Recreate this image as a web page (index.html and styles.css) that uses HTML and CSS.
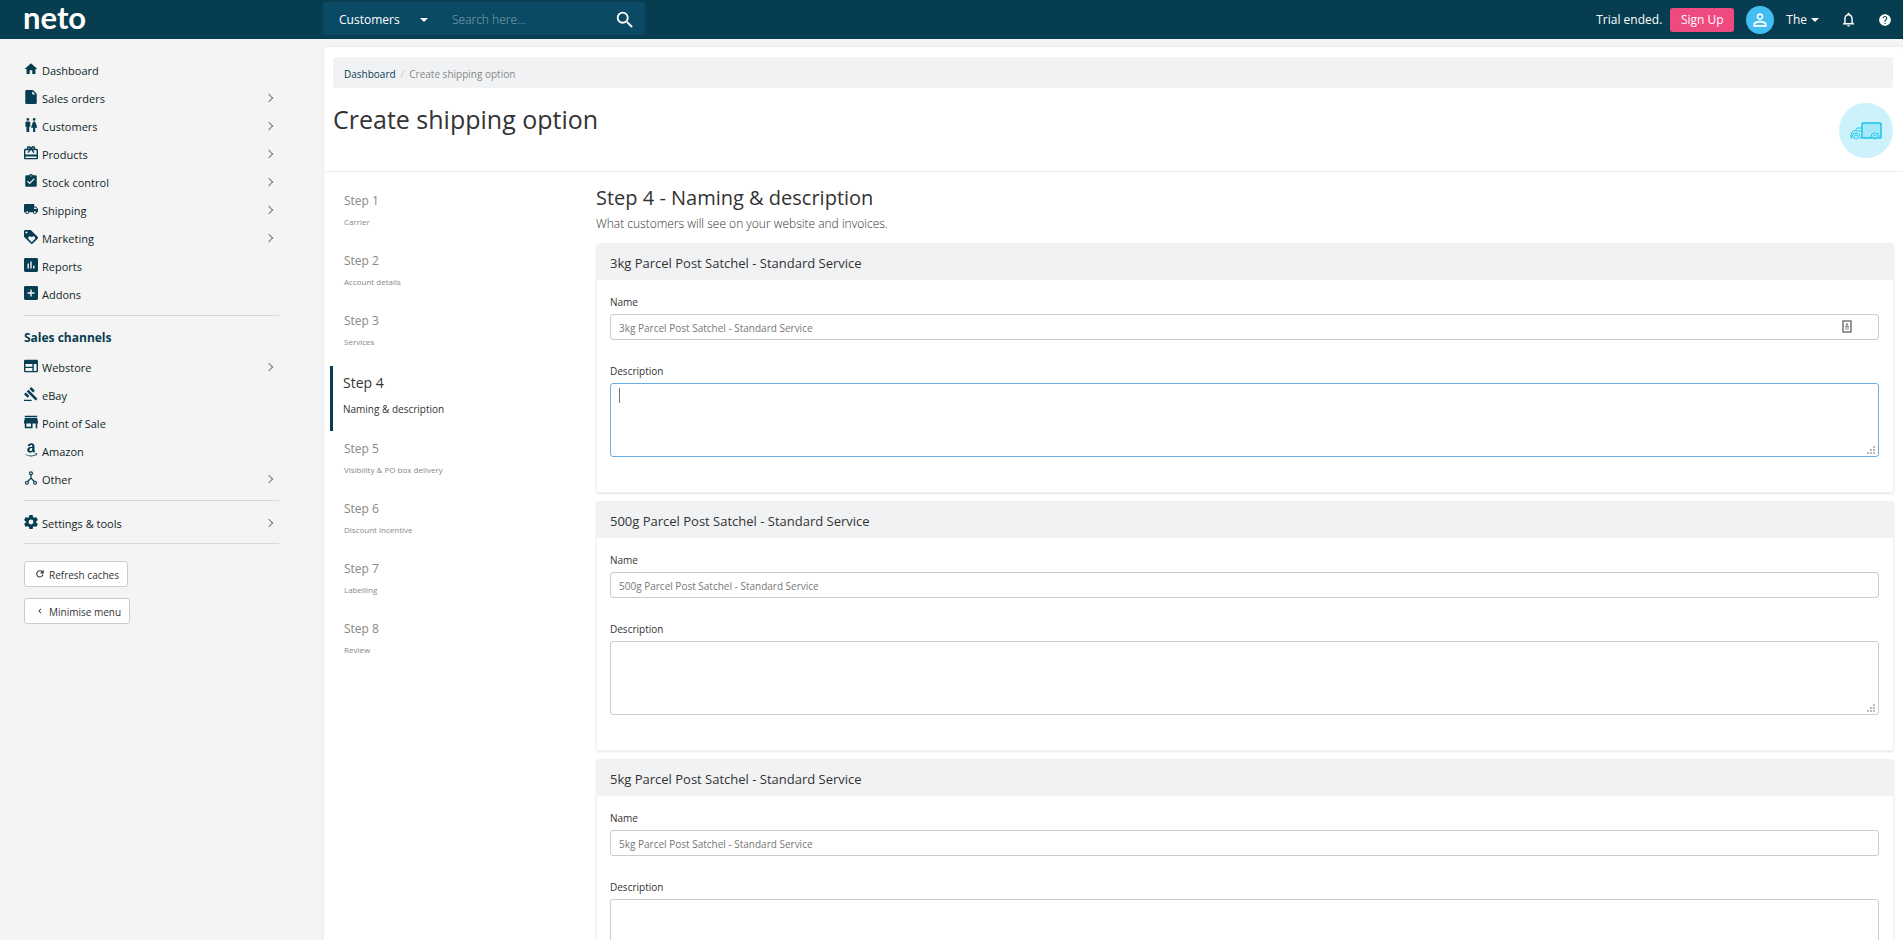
FILE: index.html
```html
<!DOCTYPE html>
<html lang="en">

<head>
    <meta charset="UTF-8">
    <meta name="viewport" content="width=device-width, initial-scale=1">
    <title>Create shipping option</title>
    <link rel="stylesheet" href="styles.css">
</head>

<body>

    <header class="topbar">
        <a class="logo" href="#">neto</a>
        <form class="search">
            <select class="search-type" aria-label="Search in">
                <option>Customers</option>
                <option>Products</option>
            </select>
            <input class="search-text" type="text" placeholder="Search here..." aria-label="Search">
            <button class="search-btn" type="button" aria-label="Search">
                <svg viewBox="0 0 24 24"><path d="M15.5 14h-.79l-.28-.27A6.471 6.471 0 0 0 16 9.5 6.5 6.5 0 1 0 9.5 16c1.61 0 3.09-.59 4.23-1.57l.27.28v.79l5 4.99L20.49 19l-4.99-5zm-6 0C7.01 14 5 11.99 5 9.5S7.01 5 9.5 5 14 7.01 14 9.5 11.99 14 9.5 14z"/></svg>
            </button>
        </form>
        <div class="account">
            <span class="trial">Trial ended.</span>
            <button class="signup">Sign Up</button>
            <span class="avatar"><svg viewBox="0 0 24 24"><path d="M12 5.9a2.1 2.1 0 1 1 0 4.2 2.1 2.1 0 0 1 0-4.2m0 9c2.97 0 6.1 1.46 6.1 2.1v1.1H5.9V17c0-.64 3.13-2.1 6.1-2.1M12 4C9.79 4 8 5.79 8 8s1.79 4 4 4 4-1.79 4-4-1.79-4-4-4zm0 9c-2.67 0-8 1.34-8 4v3h16v-3c0-2.66-5.33-4-8-4z"/></svg></span>
            <button class="user">The <span class="caret"></span></button>
            <button class="icon-btn bell" aria-label="Notifications"><svg viewBox="0 0 24 24"><path d="M12 22c1.1 0 2-.9 2-2h-4c0 1.1.89 2 2 2zm6-6v-5c0-3.07-1.64-5.64-4.5-6.32V4c0-.83-.67-1.5-1.5-1.5s-1.5.67-1.5 1.5v.68C7.63 5.36 6 7.92 6 11v5l-2 2v1h16v-1l-2-2zm-2 1H8v-6c0-2.48 1.51-4.5 4-4.5s4 2.02 4 4.5v6z"/></svg></button>
            <button class="icon-btn" aria-label="Help"><svg viewBox="0 0 24 24"><path d="M12 2C6.48 2 2 6.48 2 12s4.48 10 10 10 10-4.48 10-10S17.52 2 12 2zm1 17h-2v-2h2v2zm2.07-7.75l-.9.92C13.45 12.9 13 13.5 13 15h-2v-.5c0-1.1.45-2.1 1.17-2.83l1.24-1.26c.37-.36.59-.86.59-1.41 0-1.1-.9-2-2-2s-2 .9-2 2H8c0-2.21 1.79-4 4-4s4 1.79 4 4c0 .88-.36 1.68-.93 2.25z"/></svg></button>
        </div>
    </header>

    <div class="page">

        <nav class="sidebar">
            <ul class="menu">
                <li><a href="#"><svg viewBox="1 1 22 22"><path d="M10 20v-6h4v6h5v-8h3L12 3 2 12h3v8z"/></svg>Dashboard</a></li>
                <li class="sub"><a href="#"><svg viewBox="1 1 22 22"><path d="M5 1h10l6 6v14a2 2 0 0 1-2 2H5a2 2 0 0 1-2-2V3a2 2 0 0 1 2-2zm9 2v5h5z"/></svg>Sales orders</a></li>
                <li class="sub"><a href="#"><svg viewBox="2 2 20 20"><path d="M5.500 22v-7.500H4V9c0-1.100.9-2 2-2h3c1.100 0 2 .9 2 2v5.500H9.500V22h-4zM18 22v-6h3l-2.540-7.630A2 2 0 0 0 16.560 7h-.12a2 2 0 0 0-1.900 1.370L12 16h3v6h3zM7.500 6a2 2 0 1 0 0-4 2 2 0 0 0 0 4zm9 0a2 2 0 1 0 0-4 2 2 0 0 0 0 4z"/></svg>Customers</a></li>
                <li class="sub"><a href="#"><svg viewBox="2 2 20 20"><path d="M20 6h-2.180c.11-.31.18-.65.18-1a2.996 2.996 0 0 0-5.500-1.650l-.5.670-.5-.680C10.960 2.540 10.050 2 9 2 7.340 2 6 3.340 6 5c0 .35.07.69.18 1H4c-1.110 0-2 .89-2 2v11c0 1.110.89 2 2 2h16c1.110 0 2-.89 2-2V8c0-1.110-.89-2-2-2zm-5-2c.55 0 1 .45 1 1s-.45 1-1 1-1-.45-1-1 .45-1 1-1zM9 4c.55 0 1 .45 1 1s-.45 1-1 1-1-.45-1-1 .45-1 1-1zm11 15H4v-2h16v2zm0-5H4V8h5.080L7 10.830 8.620 12 11 8.760l1-1.360 1 1.360L15.380 12 17 10.830 14.920 8H20v6z"/></svg>Products</a></li>
                <li class="sub"><a href="#"><svg viewBox="1 1 22 22"><path d="M19 3h-4.180C14.400 1.840 13.300 1 12 1c-1.300 0-2.400.84-2.820 2H5c-1.100 0-2 .9-2 2v14c0 1.100.9 2 2 2h14c1.100 0 2-.9 2-2V5c0-1.100-.9-2-2-2zm-7 0c.55 0 1 .45 1 1s-.45 1-1 1-1-.45-1-1 .45-1 1-1zm-2 14l-4-4 1.410-1.410L10 14.170l6.590-6.590L18 9l-8 8z"/></svg>Stock control</a></li>
                <li class="sub"><a href="#"><svg viewBox="1 1 22 22"><path d="M20 8h-3V4H3c-1.100 0-2 .9-2 2v11h2c0 1.660 1.340 3 3 3s3-1.340 3-3h6c0 1.660 1.340 3 3 3s3-1.340 3-3h2v-5l-3-4zM6 18.500c-.83 0-1.500-.67-1.500-1.500s.67-1.500 1.500-1.500 1.500.67 1.500 1.500-.67 1.500-1.500 1.500zm13.500-9l1.960 2.500H17V9.500h2.500zm-1.500 9c-.83 0-1.500-.67-1.500-1.500s.67-1.500 1.500-1.500 1.500.67 1.500 1.500-.67 1.500-1.500 1.500z"/></svg>Shipping</a></li>
                <li class="sub"><a href="#"><svg viewBox="2 2 20 20"><path d="M21.410 11.580l-9-9C12.050 2.220 11.550 2 11 2H4c-1.100 0-2 .9-2 2v7c0 .55.22 1.050.59 1.420l9 9c.36.36.86.58 1.410.58.55 0 1.050-.22 1.410-.59l7-7c.37-.36.59-.86.59-1.410 0-.55-.23-1.060-.59-1.420zM5.500 7a1.500 1.500 0 1 1 0-3 1.500 1.500 0 0 1 0 3zm11.770 8.270L13 19.540l-4.270-4.270a2.500 2.500 0 1 1 3.540-3.540l.73.740.73-.73a2.500 2.500 0 1 1 3.540 3.540z"/></svg>Marketing</a></li>
                <li><a href="#"><svg viewBox="2 2 20 20"><path d="M20 2H4c-1.100 0-2 .9-2 2v16c0 1.100.9 2 2 2h16c1.100 0 2-.9 2-2V4c0-1.100-.9-2-2-2zM9 17H7v-7h2v7zm4 0h-2V7h2v10zm4 0h-2v-4h2v4z"/></svg>Reports</a></li>
                <li><a href="#"><svg viewBox="2 2 20 20"><path d="M20 2H4c-1.100 0-2 .9-2 2v16c0 1.100.9 2 2 2h16c1.100 0 2-.9 2-2V4c0-1.100-.9-2-2-2zm-3 11h-4v4h-2v-4H7v-2h4V7h2v4h4v2z"/></svg>Addons</a></li>
            </ul>

            <h2>Sales channels</h2>
            <ul class="menu channels">
                <li class="sub"><a href="#"><svg viewBox="2 2 20 20"><path d="M20 3H4c-1.100 0-2 .9-2 2v14c0 1.100.9 2 2 2h16c1.100 0 2-.9 2-2V5c0-1.100-.9-2-2-2zm-6 16H4v-4h10v4zm0-6H4V9h10v4zm6 6h-4V9h4v10z"/></svg>Webstore</a></li>
                <li><a href="#"><svg viewBox="1 1 22 22"><path d="M1 21h12v2H1zM5.240 8.070l2.830-2.830 14.140 14.140-2.830 2.830zM12.320 1l5.660 5.660-2.830 2.830-5.660-5.660zM3.830 9.480l5.660 5.660-2.830 2.830L1 12.310z"/></svg>eBay</a></li>
                <li><a href="#"><svg viewBox="3 3 18 18"><path d="M20 4H4v2h16V4zm1 10v-2l-1-5H4l-1 5v2h1v6h10v-6h4v6h2v-6h1zm-9 4H6v-4h6v4z"/></svg>Point of Sale</a></li>
                <li><a href="#"><svg viewBox="1 1 23 23"><path d="M7 6c.6-3 2.900-4.500 6-4.500 3.700 0 5.200 1.800 5.200 4.800v5.200c0 1.600.6 2.300 1.300 3.200L17 17c-.9-.8-1.300-1.200-1.700-1.900-1.300 1.300-2.500 1.900-4.300 1.900-2.700 0-4.700-1.700-4.700-4.600C6.300 8.800 9 7.200 14.600 7V6.200c0-1.400-.5-2.100-1.700-2.100s-2 .7-2.300 2.200zm7.600 3.200c-3 .1-4.500.8-4.500 3 0 1.300.7 2.100 1.800 2.100 1.800 0 2.800-1.700 2.700-5.100z"/><path d="M2 18.500c6 4 14 4 18.500 1l.6.8C16 24.500 7 24 2 18.500zM18.500 18c1.700-.4 3.500-.4 4 .2.300.8-.2 2.500-1.300 3.800l-.5-.3c.5-1.200.8-2.300.5-2.700-.3-.3-1.500-.4-2.700-.5z"/></svg>Amazon</a></li>
                <li class="sub"><a href="#"><svg viewBox="0 0 24 24" class="line"><circle cx="12" cy="4" r="2.500"/><circle cx="5" cy="20" r="2.500"/><circle cx="19" cy="20" r="2.500"/><path d="M12 6v7M12 12l-5.500 6M12 12l5.500 6"/></svg>Other</a></li>
            </ul>

            <ul class="menu tools">
                <li class="sub"><a href="#"><svg viewBox="2 2 20 20"><path d="M19.430 12.980c.04-.32.07-.64.07-.98s-.03-.66-.07-.98l2.110-1.650c.19-.15.24-.42.12-.64l-2-3.460c-.12-.22-.39-.3-.61-.22l-2.490 1c-.52-.4-1.080-.73-1.690-.98l-.38-2.650A.488.488 0 0 0 14 2h-4c-.25 0-.46.18-.49.42l-.38 2.650c-.61.25-1.170.59-1.690.98l-2.490-1c-.23-.09-.49 0-.61.22l-2 3.460c-.13.22-.07.49.12.64l2.110 1.650c-.04.32-.07.65-.07.98s.03.66.07.98l-2.110 1.650c-.19.15-.24.42-.12.64l2 3.460c.12.22.39.3.61.22l2.490-1c.52.4 1.080.73 1.690.98l.38 2.650c.03.24.24.42.49.42h4c.25 0 .46-.18.49-.42l.38-2.650c.61-.25 1.170-.59 1.690-.98l2.490 1c.23.09.49 0 .61-.22l2-3.460c.12-.22.07-.49-.12-.64l-2.110-1.650zM12 15.500a3.500 3.500 0 1 1 0-7 3.500 3.500 0 0 1 0 7z"/></svg>Settings &amp; tools</a></li>
            </ul>

            <div class="side-buttons">
                <button class="btn"><svg viewBox="0 0 24 24"><path d="M19 13a7.500 7.500 0 1 1-2-6.500" fill="none" stroke="currentColor" stroke-width="2.500"/><path d="M21 2v9h-9z"/></svg>Refresh caches</button>
                <button class="btn"><svg viewBox="0 0 24 24"><path d="M15.410 7.410L14 6l-6 6 6 6 1.410-1.410L10.830 12z"/></svg>Minimise menu</button>
            </div>
        </nav>

        <main class="main">
            <ol class="breadcrumb">
                <li><a href="#">Dashboard</a></li>
                <li>Create shipping option</li>
            </ol>

            <div class="title">
                <h1>Create shipping option</h1>
                <span class="truck">
                    <svg viewBox="0 0 32 18">
                        <path d="M12 1h19v15H12z" fill="#a4e8f8"/>
                        <path d="M3 16H1v-4l2-3h2l2-3h5M6 9h6M12 1h19v15h-3M12 1v15h10M9 16h3"/>
                        <path d="M2 15a4 4 0 0 1 8 0M21 15a4 4 0 0 1 8 0" fill="#ccf2fb"/>
                        <circle cx="6" cy="15" r="2"/>
                        <circle cx="25" cy="15" r="2"/>
                    </svg>
                </span>
            </div>

            <div class="wizard">
                <ol class="steps">
                    <li><a href="#"><strong>Step 1</strong><span>Carrier</span></a></li>
                    <li><a href="#"><strong>Step 2</strong><span>Account details</span></a></li>
                    <li><a href="#"><strong>Step 3</strong><span>Services</span></a></li>
                    <li class="active"><a href="#"><strong>Step 4</strong><span>Naming &amp; description</span></a></li>
                    <li><a href="#"><strong>Step 5</strong><span>Visibility &amp; PO box delivery</span></a></li>
                    <li><a href="#"><strong>Step 6</strong><span>Discount incentive</span></a></li>
                    <li><a href="#"><strong>Step 7</strong><span>Labelling</span></a></li>
                    <li><a href="#"><strong>Step 8</strong><span>Review</span></a></li>
                </ol>

                <form class="content">
                    <h2>Step 4 - Naming &amp; description</h2>
                    <p class="intro">What customers will see on your website and invoices.</p>

                    <section class="panel">
                        <h3>3kg Parcel Post Satchel - Standard Service</h3>
                        <div class="panel-body">
                            <label for="name1">Name</label>
                            <div class="field">
                                <input id="name1" type="text" value="3kg Parcel Post Satchel - Standard Service">
                                <svg class="autofill" viewBox="0 0 10 13"><path d="M1 1h8v11H1z" fill="none" stroke="#777" stroke-width="1.500"/><circle cx="5" cy="4.500" r="1.200"/><path d="M3 6h4v1.500H3zM3 8.500h4v1H3z"/></svg>
                            </div>
                            <label for="desc1">Description</label>
                            <div class="field">
                                <textarea id="desc1" class="focused"></textarea>
                                <span class="cursor"></span>
                            </div>
                        </div>
                    </section>

                    <section class="panel">
                        <h3>500g Parcel Post Satchel - Standard Service</h3>
                        <div class="panel-body">
                            <label for="name2">Name</label>
                            <div class="field">
                                <input id="name2" type="text" value="500g Parcel Post Satchel - Standard Service">
                            </div>
                            <label for="desc2">Description</label>
                            <div class="field">
                                <textarea id="desc2"></textarea>
                            </div>
                        </div>
                    </section>

                    <section class="panel">
                        <h3>5kg Parcel Post Satchel - Standard Service</h3>
                        <div class="panel-body">
                            <label for="name3">Name</label>
                            <div class="field">
                                <input id="name3" type="text" value="5kg Parcel Post Satchel - Standard Service">
                            </div>
                            <label for="desc3">Description</label>
                            <div class="field">
                                <textarea id="desc3"></textarea>
                            </div>
                        </div>
                    </section>
                </form>
            </div>
        </main>

    </div>

</body>

</html>
```
FILE: styles.css
```css
* {
    box-sizing: border-box;
}

body {
    margin: 0;
    height: 100vh;
    overflow: hidden;
    display: flex;
    flex-direction: column;
    background: #f4f4f4;
    color: #333;
    font-family: "Open Sans", sans-serif;
    font-size: 12px;
}

h1, h2, h3, p, ul, ol {
    margin: 0;
    padding: 0;
    font-weight: 400;
}

li {
    list-style: none;
}

a {
    color: inherit;
    text-decoration: none;
}

button, input, select, textarea {
    font: inherit;
    color: inherit;
}

button {
    border: none;
    background: none;
    padding: 0;
    cursor: pointer;
}

svg {
    fill: currentColor;
    display: block;
}


/* TOP BAR */

.topbar {
    flex: none;
    display: flex;
    align-items: center;
    height: 39px;
    background: #073d50;
    color: #fff;
}

.logo {
    width: 323px;
    padding: 0 0 5px 23px;
    font-family: Lato, sans-serif;
    font-size: 31px;
    font-weight: 700;
    line-height: 34px;
}

.search {
    display: flex;
    align-items: center;
    width: 322px;
    height: 33px;
    margin-bottom: 2px;
    padding: 2px 9px 0 16px;
    border-radius: 3px;
    background: #0b4a64;
}

.search-type {
    appearance: none;
    width: 89px;
    border: none;
    background: url("data:image/svg+xml,%3Csvg xmlns='http://www.w3.org/2000/svg' width='8' height='4'%3E%3Cpath d='M0 0h8L4 4z' fill='white'/%3E%3C/svg%3E") no-repeat right center;
}

.search-text {
    flex: 1;
    min-width: 0;
    margin-left: 24px;
    padding: 0;
    border: none;
    background: none;
}

.search-text::placeholder {
    color: #86a8b6;
    font-weight: 300;
}

.search-btn svg {
    width: 22px;
}

.account {
    display: flex;
    align-items: center;
    margin-left: auto;
    padding-right: 11px;
}

.signup {
    width: 64px;
    height: 24px;
    margin: 0 12px 0 8px;
    border-radius: 3px;
    background: #ef4a80;
}

.avatar {
    width: 28px;
    height: 28px;
    padding: 4px;
    margin-right: 12px;
    border-radius: 50%;
    background: #44bdf0;
}

.user {
    display: flex;
    align-items: center;
    gap: 4px;
}

.caret {
    border: 4px solid transparent;
    border-top-color: #fff;
    border-bottom: none;
}

.icon-btn {
    margin-left: 21px;
}

.icon-btn svg {
    width: 14px;
}

.bell svg {
    width: 17px;
}

.page {
    flex: 1;
    min-height: 0;
    display: flex;
}


/* SIDE MENU */

.sidebar {
    flex: none;
    width: 324px;
    padding: 17px 45px 0 24px;
    color: #073d50;
}

.menu {
    padding-bottom: 7px;
    border-bottom: 1px solid #d8d8d8;
}

.menu li {
    display: flex;
    align-items: center;
    justify-content: space-between;
    height: 28px;
    padding-right: 7px;
}

.menu a {
    display: flex;
    align-items: center;
    gap: 4px;
    color: #111f29;
    font-size: 11px;
}

.menu svg {
    width: 14px;
    height: 14px;
    margin-bottom: 2px;
    color: #073d50;
}

.menu .line {
    stroke: currentColor;
    stroke-width: 2;
    fill: none;
}

.sub::after {
    content: "";
    width: 5px;
    height: 5px;
    border-top: 1px solid #777;
    border-right: 1px solid #777;
    transform: rotate(45deg);
}

.sidebar h2 {
    padding: 13px 0 6px;
    font-size: 12px;
    font-weight: 700;
    line-height: 18px;
}

.tools {
    padding: 8px 0 6px;
}

.side-buttons {
    display: flex;
    flex-direction: column;
    align-items: flex-start;
    gap: 11px;
    padding-top: 17px;
}

.btn {
    display: flex;
    align-items: center;
    gap: 4px;
    height: 26px;
    padding: 2px 8px 0 10px;
    border: 1px solid #ccc;
    border-radius: 3px;
    background: #fff;
    color: #333;
    font-size: 10px;
}

.btn svg {
    width: 10px;
    margin-bottom: 2px;
}


/* MAIN */

.main {
    flex: 1;
    min-width: 0;
    margin-top: 8px;
    border-radius: 4px 4px 0 0;
    background: #fff;
    box-shadow: 0 0 4px rgba(0, 0, 0, 0.06);
}

.breadcrumb {
    display: flex;
    align-items: center;
    height: 31px;
    margin: 10px 10px 0 9px;
    padding: 2px 11px 0;
    border-radius: 3px;
    background: #f1f2f4;
    color: #888;
    font-size: 10px;
}

.breadcrumb a {
    color: #073d50;
}

.breadcrumb li + li::before {
    content: "/";
    padding: 0 5px;
    color: #ccc;
}

.title {
    display: flex;
    justify-content: space-between;
    align-items: flex-start;
    height: 84px;
    padding: 15px 10px 0 9px;
    border-bottom: 1px solid #eee;
}

.title h1 {
    font-size: 25px;
    line-height: 32px;
}

.truck {
    display: flex;
    align-items: center;
    justify-content: center;
    width: 54px;
    height: 55px;
    border-radius: 50%;
    background: #ccf2fb;
}

.truck svg {
    width: 32px;
    fill: none;
    stroke: #1cc4ec;
}

.wizard {
    display: flex;
}


/* STEPS */

.steps {
    flex: none;
    width: 266px;
    padding: 13px 0 0 6px;
}

.steps a {
    display: block;
    height: 60px;
    padding: 5px 0 0 14px;
    color: #888;
}

.steps strong, .steps span {
    display: block;
    font-size: 12px;
    font-weight: 400;
    line-height: 22px;
}

.steps span {
    font-size: 8px;
    line-height: 20px;
}

.steps .active a {
    height: 65px;
    margin: 1px 0 2px;
    border-left: 3px solid #073d50;
    padding: 4px 0 0 10px;
    color: #333;
}

.steps .active strong {
    font-size: 14px;
    line-height: 26px;
}

.steps .active span {
    font-size: 10px;
    line-height: 26px;
}


/* FORM */

.content {
    flex: 1;
    min-width: 0;
    padding: 12px 9px 0 6px;
}

.content h2 {
    font-size: 20px;
    line-height: 28px;
}

.intro {
    margin-bottom: 7px;
    font-size: 12px;
    font-weight: 300;
    line-height: 24px;
}

.panel {
    height: 250px;
    margin-bottom: 8px;
    border: 1px solid #f1f2f4;
    border-radius: 3px;
    box-shadow: 0 1px 2px rgba(0, 0, 0, 0.1);
}

.panel h3 {
    padding: 2px 13px 0;
    background: #f1f2f4;
    font-size: 13px;
    line-height: 34px;
}

.panel-body {
    padding: 14px 14px 0 13px;
}

.panel label {
    display: block;
    font-size: 10px;
    line-height: 16px;
}

.field {
    position: relative;
    margin: 4px 0 23px;
}

.field input, .field textarea {
    display: block;
    width: 100%;
    height: 26px;
    padding: 2px 8px 0;
    border: 1px solid #ccc;
    border-radius: 3px;
    background: #fff;
    color: #777;
    font-size: 10px;
}

.field textarea {
    height: 74px;
    resize: none;
    background: url("data:image/svg+xml,%3Csvg xmlns='http://www.w3.org/2000/svg' width='8' height='8' fill='%23bbb'%3E%3Cpath d='M6 0h2v2H6zM3 3h2v2H3zM6 3h2v2H6zM0 6h2v2H0zM3 6h2v2H3zM6 6h2v2H6z'/%3E%3C/svg%3E") no-repeat right 3px bottom 2px #fff;
}

.field .focused {
    border-color: #66afe9;
}

.autofill {
    position: absolute;
    top: 6px;
    right: 27px;
    width: 10px;
    color: #888;
}

.cursor {
    position: absolute;
    top: 5px;
    left: 9px;
    width: 1px;
    height: 15px;
    background: #777;
}
```
